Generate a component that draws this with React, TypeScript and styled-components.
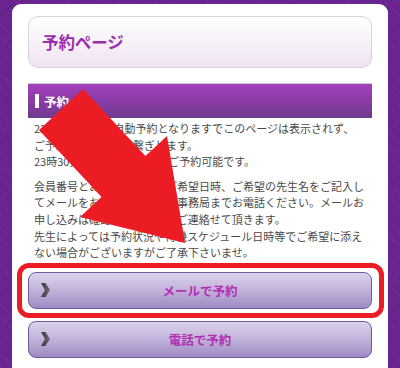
import React from "react";
import styled, { createGlobalStyle } from "styled-components";

const GlobalStyle = createGlobalStyle`
  html, body {
    margin: 0;
    padding: 0;
  }
  body {
    background-color: #6a2490;
    background-image:
      repeating-linear-gradient(45deg, rgba(255,255,255,0.035) 0 1px, transparent 1px 9px),
      repeating-linear-gradient(-45deg, rgba(0,0,0,0.05) 0 1px, transparent 1px 9px);
    font-family: "Noto Sans CJK JP", "Noto Sans", sans-serif;
  }
`;

const Page = styled.div`
  position: relative;
  height: 368px;
  overflow: hidden;
  padding: 4px 12px 0;
  box-sizing: border-box;
`;

const Panel = styled.div`
  background: #fff;
  border-radius: 9px 9px 0 0;
  padding: 12px 16px 0;
  height: 364px;
  box-sizing: border-box;
`;

const TitleBox = styled.div`
  display: flex;
  align-items: center;
  height: 52px;
  box-sizing: border-box;
  padding-left: 13px;
  border: 1px solid #d9d3db;
  border-radius: 10px;
  background: linear-gradient(#ffffff 0%, #f8f2f9 45%, #efe3f3 100%);
`;

const Title = styled.h1`
  margin: 0;
  font-size: 16.5px;
  font-weight: 700;
  color: #9a2dad;
  letter-spacing: -0.1px;
`;

const SectionBar = styled.div`
  display: flex;
  align-items: center;
  gap: 5px;
  margin-top: 15px;
  height: 35px;
  box-sizing: border-box;
  padding-left: 7px;
  border-top: 1px solid #d3c6d8;
  background: linear-gradient(#a340bb 0%, #8a3ba6 50%, #6f3a8e 100%);
`;

const SectionMark = styled.span`
  width: 4px;
  height: 14px;
  background: #fff;
`;

const SectionTitle = styled.h2`
  margin: 0;
  font-size: 12.5px;
  font-weight: 700;
  color: #fff;
`;

const Para = styled.p<{ $gap: number }>`
  margin: ${(p) => p.$gap}px 0 0;
  padding-left: 6px;
  font-size: 11px;
  line-height: 16.6px;
  color: #4a4a4a;
  white-space: nowrap;
`;

const Actions = styled.div`
  display: flex;
  flex-direction: column;
  gap: 12px;
  margin-top: 11px;
`;

const Highlight = styled.div`
  position: relative;
  &::after {
    content: "";
    position: absolute;
    top: -9px;
    bottom: -9px;
    left: -11px;
    right: -12px;
    border: 5.5px solid #ec1c24;
    border-radius: 12px;
    pointer-events: none;
  }
`;

const ActionButton = styled.button`
  display: grid;
  grid-template-columns: 40px 1fr 40px;
  align-items: center;
  width: 100%;
  height: 37px;
  padding: 0;
  box-sizing: border-box;
  border: 1px solid #6f5c9e;
  border-radius: 8px;
  background: linear-gradient(#dcd2ea 0%, #c4b5dc 45%, #9f8ac4 100%);
  font-family: inherit;
  cursor: pointer;
`;

const Chevron = styled.svg`
  margin-left: 12px;
`;

const ButtonLabel = styled.span`
  text-align: center;
  font-size: 12.5px;
  font-weight: 700;
  color: #b22fb3;
`;

const Pointer = styled.svg`
  position: absolute;
  top: 0;
  left: 0;
  pointer-events: none;
`;

function Arrow() {
  return (
    <Chevron width="9" height="14" viewBox="0 0 9 14">
      <defs>
        <linearGradient id="chev" x1="0" y1="0" x2="1" y2="0">
          <stop offset="0" stopColor="#34333b" />
          <stop offset="1" stopColor="#6f6c7a" />
        </linearGradient>
      </defs>
      <polygon points="0,0 4.5,0 9,7 4.5,14 0,14 4,7" fill="url(#chev)" />
    </Chevron>
  );
}

function Action({ label }: { label: string }) {
  return (
    <ActionButton>
      <Arrow />
      <ButtonLabel>{label}</ButtonLabel>
      <span />
    </ActionButton>
  );
}

export default function App() {
  return (
    <>
      <GlobalStyle />
      <Page>
        <Panel>
          <TitleBox>
            <Title>予約ページ</Title>
          </TitleBox>
          <SectionBar>
            <SectionMark />
            <SectionTitle>予約</SectionTitle>
          </SectionBar>
          <Para $gap={2}>
            23時30分以降は自動予約となりますでこのページは表示されず、
            <br />
            ご予約はお電話でお繋ぎします。
            <br />
            23時30分までは当ページでご予約可能です。
          </Para>
          <Para $gap={8}>
            会員番号とお名前と年齢、ご希望日時、ご希望の先生名をご記入し
            <br />
            てメールをお送りいただくか事務局までお電話ください。メールお
            <br />
            申し込みは確認後、当方よりご連絡せて頂きます。
            <br />
            先生によっては予約状況や待機スケジュール日時等でご希望に添え
            <br />
            ない場合がございますがご了承下さいませ。
          </Para>
          <Actions>
            <Highlight>
              <Action label="メールで予約" />
            </Highlight>
            <Action label="電話で予約" />
          </Actions>
        </Panel>
        <Pointer width="400" height="368" viewBox="0 0 400 368">
          <polygon
            points="83,89 145.5,156 167,136 185,243 80,217 101.5,197 39,130"
            fill="#ec1c24"
          />
        </Pointer>
      </Page>
    </>
  );
}
